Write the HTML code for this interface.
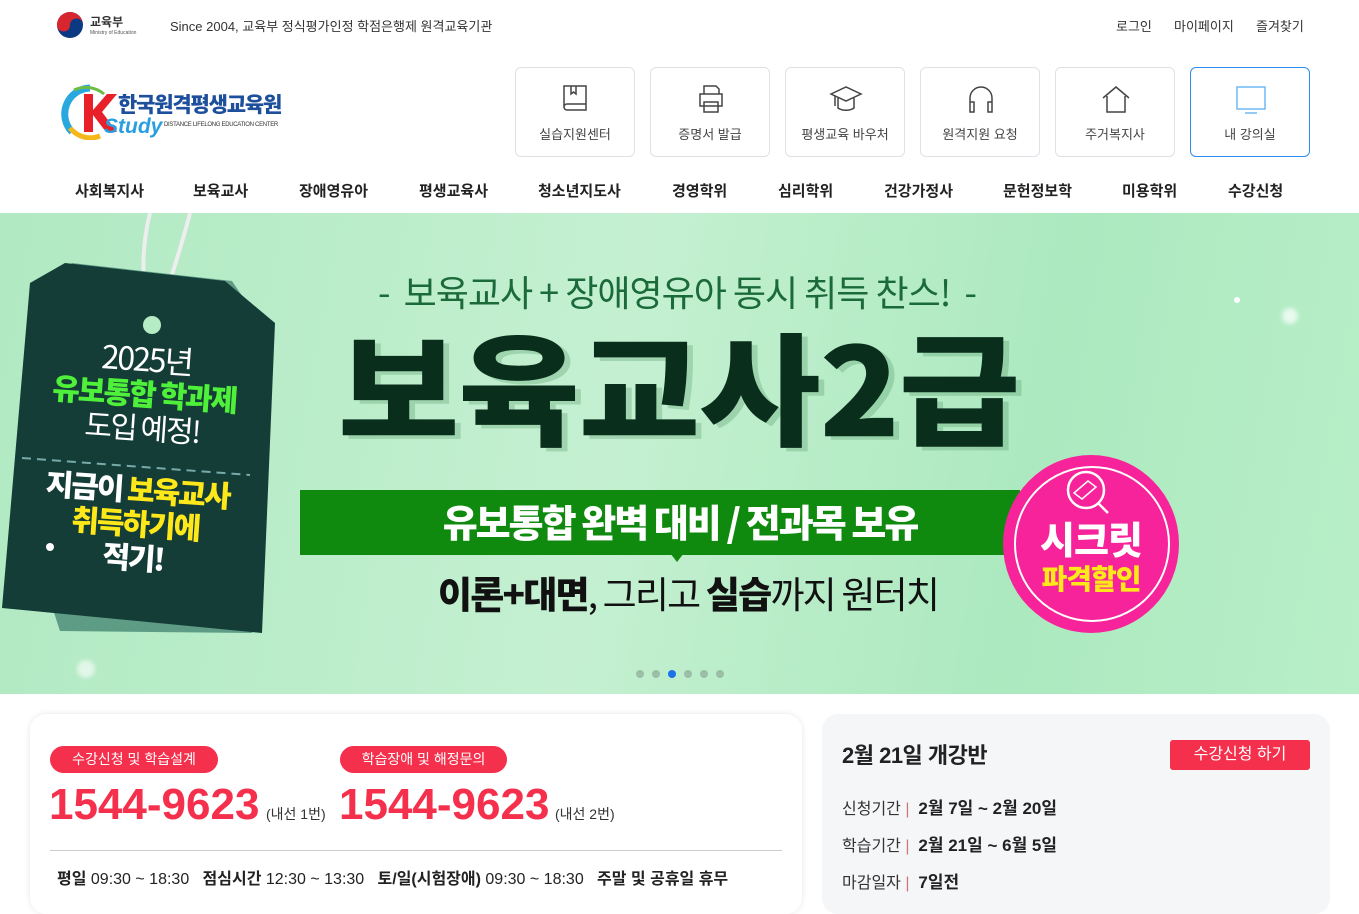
<!DOCTYPE html>
<html><head><meta charset="utf-8">
<style>
*{margin:0;padding:0;box-sizing:border-box}
body{width:1359px;height:897px;overflow:hidden;background:#fff;font-family:"Liberation Sans","Noto Sans CJK KR",sans-serif;color:#333;position:relative}
.a{position:absolute}
.k{font-family:"Liberation Sans","Noto Sans CJK KR",sans-serif}
.n{font-family:"Noto Sans CJK KR","Liberation Sans",sans-serif}
.qb{position:absolute;top:67px;width:120px;height:90px;border:1px solid #dfe1e6;border-radius:6px;text-align:center;font-size:13px;color:#444}
.qb svg{position:absolute;left:43px;top:14px}
.qb span{position:absolute;left:0;right:0;top:56px}
.nav{position:absolute;top:180px;font-size:15px;font-weight:bold;color:#222}
</style></head><body>
<!-- top bar -->
<svg class="a" style="left:56px;top:11px" width="28" height="28" viewBox="0 0 28 28"><circle cx="14" cy="14" r="13" fill="#0b3a82"/><path d="M1 14a13 13 0 0 1 26 0c0-4-3-6.5-6.5-6.5S14 10 14 14s-3 6.5-6.5 6.5S1 18 1 14z" fill="#d7262d"/></svg>
<div class="a n" style="left:90px;top:13px;font-size:12px;color:#333;font-weight:bold">교육부</div>
<div class="a" style="left:90px;top:30px;font-size:5px;color:#555">Ministry of Education</div>
<div class="a k" style="left:170px;top:16px;font-size:13px;color:#333">Since 2004, 교육부 정식평가인정 학점은행제 원격교육기관</div>
<div class="a k" style="left:1116px;top:16px;font-size:13px;color:#333">로그인</div>
<div class="a k" style="left:1174px;top:16px;font-size:13px;color:#333">마이페이지</div>
<div class="a k" style="left:1256px;top:16px;font-size:13px;color:#333">즐겨찾기</div>
<!-- logo -->
<svg class="a" style="left:60px;top:82px" width="60" height="58" viewBox="0 0 60 58"><path d="M30 6A26 26 0 0 0 12 50" stroke="#29a8e0" stroke-width="7" fill="none"/><path d="M10 46a26 26 0 0 0 30 8" stroke="#f5b719" stroke-width="5" fill="none"/><path d="M14 8a28 28 0 0 1 30 4" stroke="#6cbd45" stroke-width="3" fill="none"/><path d="M24 12h9v16l14-16h10L42 30l15 20H46L33 33v17h-9z" fill="#e8202a"/></svg>
<div class="a n" style="left:118px;top:89px;font-size:21px;font-weight:900;color:#1d4f9c;letter-spacing:-1.2px">한국원격평생교육원</div>
<div class="a" style="left:104px;top:115px;font-size:21px;font-weight:bold;font-style:italic;color:#2a9fe0">Study</div>
<div class="a" style="left:164px;top:122px;font-size:6px;color:#333;letter-spacing:-.3px">DISTANCE LIFELONG EDUCATION CENTER</div>
<!-- quick buttons -->
<div class="qb" style="left:515px"><svg width="34" height="34" viewBox="0 0 34 34" fill="none" stroke="#444" stroke-width="1.5"><path d="M5 4h22v24H8a3 3 0 0 1-3-3zM5 25a3 3 0 0 1 3-3h19"/><path d="M12 4v8l2.5-2 2.5 2V4"/></svg><span class="k">실습지원센터</span></div>
<div class="qb" style="left:650px"><svg width="34" height="34" viewBox="0 0 34 34" fill="none" stroke="#444" stroke-width="1.5"><path d="M10 12V4h12l3 3v5M6 12h22v12H6zM10 20h14v10H10z"/></svg><span class="k">증명서 발급</span></div>
<div class="qb" style="left:785px"><svg width="34" height="34" viewBox="0 0 34 34" fill="none" stroke="#444" stroke-width="1.5"><path d="M2 12l15-7 15 7-15 7zM9 16v10c4 3 12 3 16 0V16M6 14v10"/></svg><span class="k">평생교육 바우처</span></div>
<div class="qb" style="left:920px"><svg width="34" height="34" viewBox="0 0 34 34" fill="none" stroke="#444" stroke-width="1.5"><path d="M6 24V16a11 11 0 0 1 22 0v8M6 20h4v10H6zM24 20h4v10h-4z"/></svg><span class="k">원격지원 요청</span></div>
<div class="qb" style="left:1055px"><svg width="34" height="34" viewBox="0 0 34 34" fill="none" stroke="#444" stroke-width="1.5"><path d="M4 16L17 5l13 11M8 14v16h18V14"/></svg><span class="k">주거복지사</span></div>
<div class="qb" style="left:1190px;border-color:#2d8cf0"><svg width="34" height="34" viewBox="0 0 34 34" fill="none" stroke="#6fb8f5" stroke-width="1.5"><path d="M3 5h28v22H3zM11 31h12"/></svg><span class="k">내 강의실</span></div>
<!-- nav -->
<div class="nav n" style="left:75px">사회복지사</div>
<div class="nav n" style="left:193px">보육교사</div>
<div class="nav n" style="left:299px">장애영유아</div>
<div class="nav n" style="left:419px">평생교육사</div>
<div class="nav n" style="left:538px">청소년지도사</div>
<div class="nav n" style="left:672px">경영학위</div>
<div class="nav n" style="left:778px">심리학위</div>
<div class="nav n" style="left:884px">건강가정사</div>
<div class="nav n" style="left:1003px">문헌정보학</div>
<div class="nav n" style="left:1122px">미용학위</div>
<div class="nav n" style="left:1228px">수강신청</div>
<!-- banner -->
<div class="a" style="left:0;top:213px;width:1359px;height:481px;background:linear-gradient(100deg,#b0e9c2 0%,#c4f0d1 45%,#ace9bf 75%,#b8efc8 100%);overflow:hidden">
  <svg class="a" style="left:0;top:0" width="290" height="430" viewBox="0 0 290 430">
    <path d="M150 0c-10 40-8 80 2 110M190 0c-10 40-25 80-32 110" stroke="#eee" stroke-width="4" fill="none"/>
    <path d="M28 320L36 95 72 50 232 68 262 112 252 420 60 418z" fill="#5f9c86"/>
    <path d="M2 395L30 70 65 50 225 68 275 110 262 420z" fill="#143d38"/>
    <circle cx="152" cy="112" r="9" fill="#b5ecc6"/>
    <path d="M22 245L250 262" stroke="#7aa" stroke-width="2" stroke-dasharray="9 6"/>
  </svg>
  <div class="a n" style="left:30px;top:128px;width:220px;text-align:center;transform:rotate(4deg);line-height:34px">
    <div style="font-size:32px;color:#fff;letter-spacing:-2px">2025년</div>
    <div style="font-size:30px;color:#4ff03a;font-weight:900;letter-spacing:-2px">유보통합 학과제</div>
    <div style="font-size:30px;color:#fff;letter-spacing:-2px">도입 예정!</div>
    <div style="font-size:30px;color:#fff;font-weight:900;letter-spacing:-2px;margin-top:28px">지금이 <span style="color:#ffe81a">보육교사</span></div>
    <div style="font-size:30px;color:#ffe81a;font-weight:900;letter-spacing:-2px">취득하기에</div>
    <div style="font-size:30px;color:#fff;font-weight:900;letter-spacing:-2px">적기!</div>
  </div>
  <div class="a n" style="left:378px;top:52px;font-size:36px;color:#1a6a3a;letter-spacing:-1px;white-space:nowrap">-&nbsp; 보육교사 + 장애영유아 동시 취득 찬스! &nbsp;-</div>
  <div class="a n" style="left:338px;top:90px;font-size:136px;font-weight:900;color:#0a2e1c;letter-spacing:-1px;white-space:nowrap;line-height:180px;transform:scale(.97,.9);transform-origin:top left;text-shadow:6px 4px 0 rgba(80,150,100,.3)">보육교사2급</div>
  <div class="a" style="left:300px;top:277px;width:720px;height:65px;background:#0f8a0f"></div>
  <div class="a" style="left:670px;top:340px;width:0;height:0;border-left:7px solid transparent;border-right:7px solid transparent;border-top:9px solid #0f8a0f"></div>
  <div class="a n" style="left:290px;top:280px;width:780px;text-align:center;font-size:38px;font-weight:900;color:#fff;letter-spacing:-2px;line-height:56px">유보통합 완벽 대비 / 전과목 보유</div>
  <div class="a n" style="left:438px;top:352px;font-size:37px;color:#111;letter-spacing:-1.8px;white-space:nowrap"><b style="font-weight:900">이론+대면</b>, 그리고 <b style="font-weight:900">실습</b>까지 원터치</div>
  <div class="a" style="left:1003px;top:242px;width:176px;height:178px;border-radius:50%;background:#f7239a"></div>
  <div class="a" style="left:1014px;top:253px;width:156px;height:156px;border-radius:50%;border:2px solid #fff"></div>
  <svg class="a" style="left:1062px;top:255px" width="60" height="50" viewBox="0 0 60 50"><circle cx="24" cy="22" r="18" fill="none" stroke="#fff" stroke-width="2.5"/><path d="M36 35l10 10" stroke="#fff" stroke-width="2.5"/><path d="M12 25l14-12 8 6-14 12z" fill="none" stroke="#fff" stroke-width="1.5"/></svg>
  <div class="a n" style="left:1003px;top:303px;width:176px;text-align:center;font-size:38px;font-weight:900;color:#fff;letter-spacing:-1px;line-height:44px">시크릿</div>
  <div class="a n" style="left:1003px;top:348px;width:176px;text-align:center;font-size:28px;font-weight:900;color:#ffe81a;letter-spacing:-1px;line-height:34px">파격할인</div>
  <div class="a" style="left:1234px;top:84px;width:6px;height:6px;border-radius:50%;background:#fff"></div>
  <div class="a" style="left:1282px;top:95px;width:16px;height:16px;border-radius:50%;background:#fff;opacity:.7;filter:blur(2px)"></div>
  <div class="a" style="left:46px;top:330px;width:8px;height:8px;border-radius:50%;background:#fff"></div>
  <div class="a" style="left:77px;top:447px;width:18px;height:18px;border-radius:50%;background:#fff;opacity:.6;filter:blur(2px)"></div>
  <div class="a" style="left:636px;top:457px;display:flex;gap:8px">
    <i style="width:8px;height:8px;border-radius:50%;background:#9bbfa6"></i><i style="width:8px;height:8px;border-radius:50%;background:#9bbfa6"></i><i style="width:8px;height:8px;border-radius:50%;background:#1a73e8"></i><i style="width:8px;height:8px;border-radius:50%;background:#9bbfa6"></i><i style="width:8px;height:8px;border-radius:50%;background:#9bbfa6"></i><i style="width:8px;height:8px;border-radius:50%;background:#9bbfa6"></i>
  </div>
</div>
<!-- bottom left card -->
<div class="a" style="left:30px;top:714px;width:772px;height:200px;background:#fff;border-radius:16px;box-shadow:0 0 6px rgba(0,0,0,.1)"></div>
<div class="a k" style="left:50px;top:746px;width:168px;height:27px;border-radius:14px;background:#f5304c;color:#fff;font-size:14px;text-align:center;line-height:27px">수강신청 및 학습설계</div>
<div class="a k" style="left:340px;top:746px;width:167px;height:27px;border-radius:14px;background:#f5304c;color:#fff;font-size:14px;text-align:center;line-height:27px">학습장애 및 해정문의</div>
<div class="a" style="left:49px;top:780px;font-size:44px;font-weight:bold;color:#f5304c">1544-9623</div>
<div class="a k" style="left:266px;top:804px;font-size:14px;color:#333">(내선 1번)</div>
<div class="a" style="left:339px;top:780px;font-size:44px;font-weight:bold;color:#f5304c">1544-9623</div>
<div class="a k" style="left:555px;top:804px;font-size:14px;color:#333">(내선 2번)</div>
<div class="a" style="left:50px;top:850px;width:732px;height:1px;background:#ccc"></div>
<div class="a k" style="left:57px;top:865px;font-size:16px;color:#222;white-space:nowrap"><b>평일</b> 09:30 ~ 18:30 &nbsp; <b>점심시간</b> 12:30 ~ 13:30 &nbsp; <b>토/일(시험장애)</b> 09:30 ~ 18:30 &nbsp; <b>주말 및 공휴일 휴무</b></div>
<!-- bottom right card -->
<div class="a" style="left:822px;top:714px;width:508px;height:200px;background:#f5f6f8;border-radius:16px"></div>
<div class="a k" style="left:842px;top:738px;font-size:22px;font-weight:bold;color:#222;letter-spacing:-.5px">2월 21일 개강반</div>
<div class="a k" style="left:1170px;top:740px;width:140px;height:30px;border-radius:3px;background:#f5304c;color:#fff;font-size:16px;text-align:center;line-height:30px">수강신청 하기</div>
<div class="a k" style="left:842px;top:794px;font-size:16px;color:#333">신청기간 <span style="color:#c77">|</span>&nbsp; <b style="color:#222;font-size:17px">2월 7일 ~ 2월 20일</b></div>
<div class="a k" style="left:842px;top:831px;font-size:16px;color:#333">학습기간 <span style="color:#c77">|</span>&nbsp; <b style="color:#222;font-size:17px">2월 21일 ~ 6월 5일</b></div>
<div class="a k" style="left:842px;top:868px;font-size:16px;color:#333">마감일자 <span style="color:#c77">|</span>&nbsp; <b style="color:#222;font-size:17px">7일전</b></div>
</body></html>
